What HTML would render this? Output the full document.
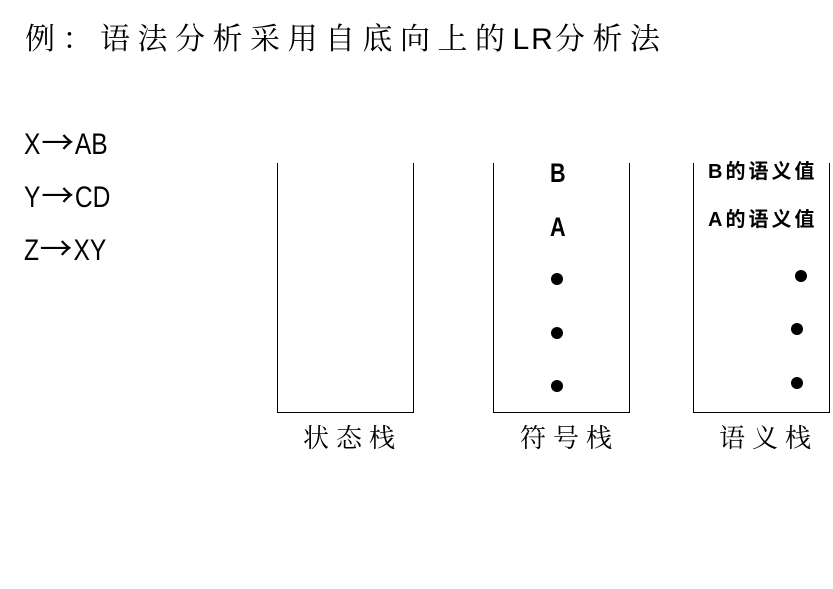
<!DOCTYPE html>
<html><head><meta charset="utf-8"><style>
body{margin:0;width:833px;height:589px;background:#fff;position:relative;overflow:hidden;font-family:"Liberation Sans","Noto Sans CJK SC",sans-serif;color:#000}
.a{position:absolute;white-space:nowrap;line-height:1}
.title{left:25px;top:21px;font-family:"Noto Serif CJK SC","Noto Serif CJK JP",serif;font-size:30px;letter-spacing:7.5px}
.title b{font-family:"Liberation Sans",sans-serif;font-weight:normal;letter-spacing:2px}
.p{left:24px;font-size:30px;transform:scaleX(0.82);transform-origin:left}
.p i{font-style:normal;font-family:"Noto Sans CJK SC",sans-serif;font-size:32px;display:inline-block;transform:scaleX(1.25);margin:0 5px}
.box{position:absolute;top:163px;height:249px;width:135px;border:1px solid #000;border-top:none}
.lab{font-family:"Noto Serif CJK SC","Noto Serif CJK JP",serif;font-size:26px;letter-spacing:7px;top:424px}
.s{font-size:27px;font-weight:bold;transform:scaleX(0.8)}
.v{font-size:20px;font-weight:bold;font-family:"Liberation Sans","Noto Sans CJK SC",sans-serif;letter-spacing:3px}
.d{position:absolute;width:12px;height:12px;border-radius:50%;background:#000}
</style></head><body>
<div class="a title">例：语法分析采用自底向上的<b>LR</b>分析法</div>
<div class="a p" style="top:125px">X<i>→</i>AB</div>
<div class="a p" style="top:178px">Y<i>→</i>CD</div>
<div class="a p" style="top:231px">Z<i>→</i>XY</div>
<div class="box" style="left:277px"></div>
<div class="box" style="left:493px"></div>
<div class="box" style="left:693px"></div>
<div class="a lab" style="left:303px">状态栈</div>
<div class="a lab" style="left:520px">符号栈</div>
<div class="a lab" style="left:719px">语义栈</div>
<div class="a s" style="left:548px;top:160px">B</div>
<div class="a s" style="left:548px;top:214px">A</div>
<div class="d" style="left:551px;top:273px"></div>
<div class="d" style="left:551px;top:327px"></div>
<div class="d" style="left:551px;top:380px"></div>
<div class="a v" style="left:708px;top:162px">B的语义值</div>
<div class="a v" style="left:708px;top:210px">A的语义值</div>
<div class="d" style="left:795px;top:270px"></div>
<div class="d" style="left:791px;top:323px"></div>
<div class="d" style="left:791px;top:377px"></div>
</body></html>
